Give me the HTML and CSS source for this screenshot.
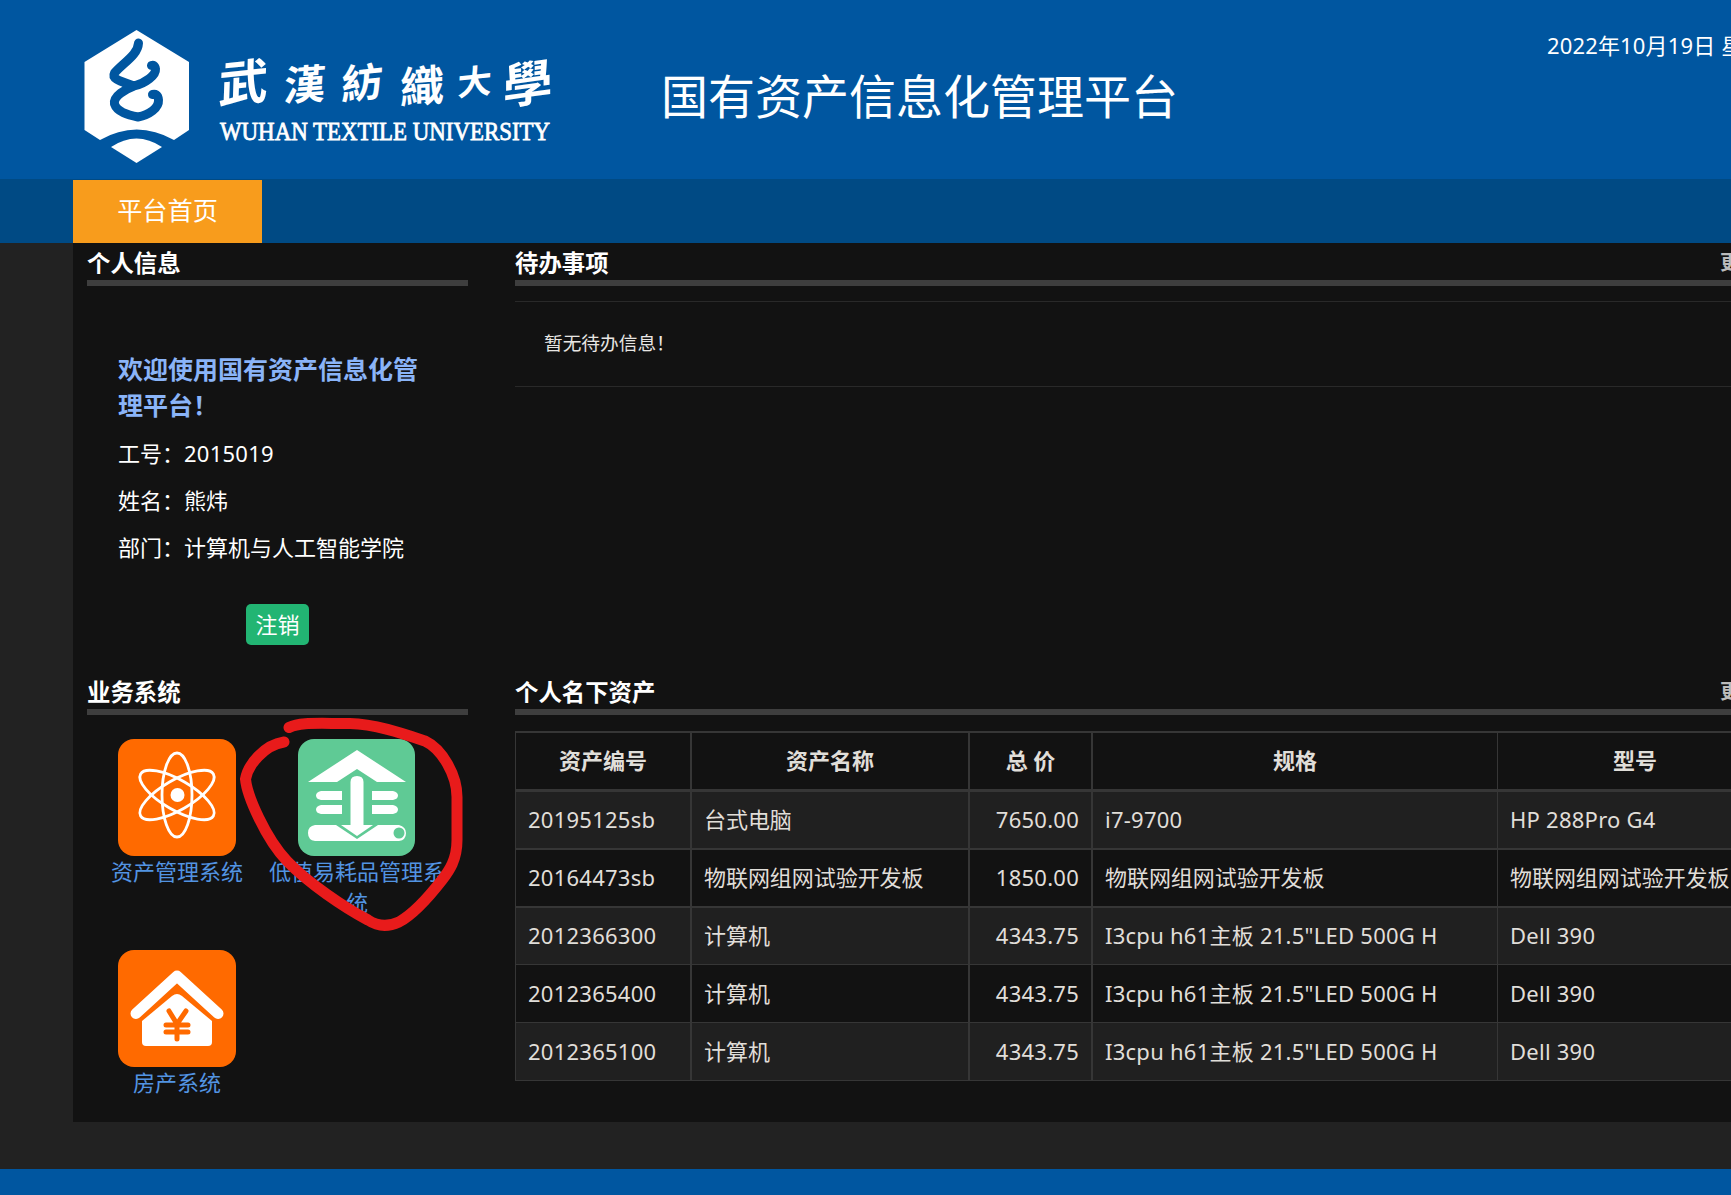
FILE: index.html
```html
<!DOCTYPE html>
<html lang="zh-CN">
<head>
<meta charset="utf-8">
<title>国有资产信息化管理平台</title>
<link rel="stylesheet" href="styles.css">
</head>
<body>
<header class="header">
  <svg class="logo" width="480" height="140" viewBox="80 26 480 140" role="img" aria-label="武汉纺织大学">
    <path fill="#fff" d="M136.500 30 L189 62 V130 L174 140 Q136.500 119 100 140 L84.500 130 V62 Z"/>
    <path fill="#fff" d="M111 147 Q136.500 130 162 147 L136.500 163 Z"/>
    <path class="logo-knot" d="M138.500 43 C138 55 123 63 114.500 73 C111 80 124 82 134 86 C146 83 156 75 155.500 69 C155 65 153 65 151.500 65.500 M134 86 C126 89 113 96 114.500 104 C117 112 128 115 138 117 C149 115 159 108 158.500 100 C158 94 155 94 152.500 94.500"/>
    <g class="logo-cn">
      <text transform="translate(218 103) skewX(-8) rotate(-6)" font-size="49">武</text>
      <text transform="translate(283 101) skewX(-8) rotate(-4)" font-size="41">漢</text>
      <text transform="translate(341 100) skewX(-8) rotate(-6)" font-size="41">紡</text>
      <text transform="translate(400 104) skewX(-4) rotate(-4)" font-size="44">織</text>
      <text transform="translate(457 96) skewX(-8) rotate(-6)" font-size="34">大</text>
      <text transform="translate(503 105) skewX(-8) rotate(-8)" font-size="49">學</text>
    </g>
    <text class="logo-en" x="220" y="139.500" textLength="330" lengthAdjust="spacingAndGlyphs">WUHAN TEXTILE UNIVERSITY</text>
  </svg>
  <h1 class="title">国有资产信息化管理平台</h1>
  <div class="date">2022年10月19日 星期三</div>
</header>
<nav class="nav"><a class="nav-tab">平台首页</a></nav>
<main class="panel">
  <section class="side">
    <h2 class="heading">个人信息</h2>
    <div class="profile">
      <p class="welcome">欢迎使用国有资产信息化管理平台！</p>
      <p class="field">工号：<span class="latin">2015019</span></p>
      <p class="field">姓名：熊炜</p>
      <p class="field">部门：计算机与人工智能学院</p>
      <button class="logout">注销</button>
    </div>
  </section>
  <section class="content">
    <h2 class="heading">待办事项<a class="more">更多</a></h2>
    <div class="todo">暂无待办信息！</div>
  </section>
  <section class="side">
    <h2 class="heading">业务系统</h2>
    <div class="apps">
      <a class="app">
        <svg width="118" height="117" viewBox="0 0 118 117">
          <rect width="118" height="117" rx="16" fill="#ff6a00"/>
          <g fill="none" stroke="#fff" stroke-width="2.800">
            <ellipse cx="59" cy="56" rx="15" ry="42"/>
            <ellipse cx="59" cy="56" rx="15" ry="42" transform="rotate(60 59 56)"/>
            <ellipse cx="59" cy="56" rx="15" ry="42" transform="rotate(-60 59 56)"/>
          </g>
          <circle cx="59.500" cy="56" r="7" fill="#fff"/>
        </svg>
        <span>资产管理系统</span>
      </a>
      <a class="app">
        <svg width="118" height="117" viewBox="0 0 118 117">
          <rect width="117" height="117" rx="16" fill="#5fca95"/>
          <g fill="#fff">
            <path d="M59 11 L108 43 H79 L59 30 L39 43 H10 Z"/>
            <path d="M52.500 43 Q52.500 37 59 37 Q65.500 37 65.500 43 V86 H75 L59 97 L43 86 H52.500 Z"/>
            <path d="M44 52 V61 H23 Q18 60 18 56.500 Q18 53 23 52 Z M44 66 V75 H23 Q18 74 18 70.500 Q18 67 23 66 Z M74 52 V61 H95 Q100 60 100 56.500 Q100 53 95 52 Z M74 66 V75 H95 Q100 74 100 70.500 Q100 67 95 66 Z"/>
            <path d="M17 86 H38 L59 100 L80 86 H101 Q108 88 108 94 Q108 101 101 102 H17 Q10 101 10 94 Q10 87 17 86 Z"/>
          </g>
          <circle cx="101" cy="94" r="5.500" fill="#5fca95"/>
        </svg>
        <span>低值易耗品管理系统</span>
      </a>
      <a class="app">
        <svg width="118" height="117" viewBox="0 0 118 117">
          <rect width="118" height="117" rx="16" fill="#ff6a00"/>
          <path d="M18 63.500 L59 26 L100 63.500" fill="none" stroke="#fff" stroke-width="11" stroke-linecap="round" stroke-linejoin="round"/>
          <path d="M24 71 L54 46 Q59 42 64 46 L94 71 V92 Q94 96 90 96 H28 Q24 96 24 92 Z" fill="#fff"/>
          <path d="M51 61 L59 74 L68 61 M59 74 V89 M48 75 H70 M48 82 H70" fill="none" stroke="#ff6a00" stroke-width="5" stroke-linecap="round"/>
        </svg>
        <span>房产系统</span>
      </a>
      <svg class="marker" width="226" height="216" viewBox="238 716 226 216">
        <path d="M289 727.500 C300 722 315 723.500 350 723.500 C375 724 404 734 425 741 C442 749 457 775 457 797 V840 C457 860 449 871 442 880 C428 898 412 915 399 922 C388 927 377 926 368 920 C345 908 308 883 287 861 C266 839 247 796 245.500 779 C248 765 264 745 284 742"/>
      </svg>
    </div>
  </section>
  <section class="content">
    <h2 class="heading">个人名下资产<a class="more">更多</a></h2>
    <table class="assets">
      <colgroup><col class="c-id"><col class="c-name"><col class="c-price"><col class="c-spec"><col class="c-model"></colgroup>
      <thead><tr><th>资产编号</th><th>资产名称</th><th>总 价</th><th>规格</th><th>型号</th></tr></thead>
      <tbody>
        <tr class="thick"><td>20195125sb</td><td class="han">台式电脑</td><td>7650.00</td><td>i7-9700</td><td>HP 288Pro G4</td></tr>
        <tr class="thick"><td>20164473sb</td><td class="han">物联网组网试验开发板</td><td>1850.00</td><td class="han">物联网组网试验开发板</td><td class="han">物联网组网试验开发板</td></tr>
        <tr class="short"><td>2012366300</td><td class="han">计算机</td><td>4343.75</td><td>I3cpu h61主板 21.5"LED 500G H</td><td>Dell 390</td></tr>
        <tr><td>2012365400</td><td class="han">计算机</td><td>4343.75</td><td>I3cpu h61主板 21.5"LED 500G H</td><td>Dell 390</td></tr>
        <tr><td>2012365100</td><td class="han">计算机</td><td>4343.75</td><td>I3cpu h61主板 21.5"LED 500G H</td><td>Dell 390</td></tr>
      </tbody>
    </table>
  </section>
</main>
<footer class="footer"></footer>
</body>
</html>
```
FILE: styles.css
```css
* { box-sizing: border-box; }
html, body { margin: 0; height: 1195px; overflow: hidden; }
body {
  background: #222;
  color: #fff;
  font: 22px/30px "Noto Sans", "Noto Sans CJK SC", sans-serif;
  display: flex;
  flex-direction: column;
  width: 1731px;
}
h1, h2, p { margin: 0; }

.header {
  flex: none;
  height: 179px;
  background: #0056a0;
  display: flex;
  align-items: flex-start;
  white-space: nowrap;
}
.logo { flex: none; margin: 26px 0 0 80px; }
.logo-knot { fill: none; stroke: #0056a0; stroke-width: 9; stroke-linecap: round; stroke-linejoin: round; }
.logo-cn { fill: #fff; font-family: "Noto Sans CJK TC", sans-serif; font-weight: 700; }
.logo-en { fill: #fff; font: 26px "Liberation Serif", serif; stroke: #fff; stroke-width: .8; }
.title { flex: none; margin: 61px 0 0 101px; width: 886px; font-size: 47px; line-height: 70px; font-weight: 400; }
.date { flex: none; padding-top: 30px; letter-spacing: .15px; }

.nav { flex: none; height: 64px; padding: 1px 0 0 73px; background: #004a84; }
.nav-tab {
  display: flex;
  align-items: center;
  justify-content: center;
  width: 189px;
  height: 63px;
  padding-bottom: 3px;
  background: #f89c1c;
  font-size: 25.200px;
}

.panel {
  flex: none;
  height: 879px;
  margin-left: 73px;
  padding-left: 14px;
  background: #121212;
  display: grid;
  grid-template-columns: 381px 1259px;
  grid-template-rows: 429px 450px;
  column-gap: 47px;
  overflow: hidden;
}
.heading {
  display: flex;
  justify-content: space-between;
  height: 43px;
  padding-top: 3px;
  border-bottom: 6px solid #3e3e3e;
  font-size: 23.400px;
  line-height: 34px;
  font-weight: 700;
}
.more { margin-right: 14px; color: #bbb; font-size: 20px; }

.profile { display: flex; flex-direction: column; padding: 65px 31px 0; }
.welcome { color: #8ab4f8; font-size: 25px; line-height: 36px; font-weight: 700; margin-bottom: 7px; }
.field { line-height: 47px; }
.latin { letter-spacing: .25px; }
.logout {
  width: 63px;
  height: 41px;
  margin: 33px 0 0 128px;
  padding: 0 0 1px;
  border: 0;
  border-radius: 5px;
  background: #22b573;
  color: #fff;
  font: inherit;
}

.todo {
  height: 86px;
  margin-top: 15px;
  padding-left: 29px;
  border: solid #292929;
  border-width: 1px 0;
  font-size: 18.700px;
  line-height: 82px;
  color: #e8e6e3;
}

.apps {
  position: relative;
  display: grid;
  grid-template-columns: 180px 180px;
  grid-auto-rows: 211px;
  padding-top: 24px;
}
.app {
  display: flex;
  flex-direction: column;
  align-items: center;
  text-align: center;
  color: #5294e2;
  line-height: 31px;
}
.marker { position: absolute; left: 151px; top: 1px; fill: none; stroke: #e81b1b; stroke-width: 11; stroke-linecap: round; stroke-linejoin: round; }

.assets {
  width: 1259px;
  margin-top: 16px;
  table-layout: fixed;
  border-collapse: separate;
  border-spacing: 0;
  color: #e0ded9;
}
.c-id { width: 177px; }
.c-name { width: 278px; }
.c-price { width: 123px; }
.c-spec { width: 405px; }
.c-model { width: 276px; }
.assets th, .assets td {
  height: 58px;
  padding: 0 12px 2px;
  border: solid #363636;
  border-width: 0 2px 1px 0;
  white-space: nowrap;
  text-align: left;
  letter-spacing: .25px;
}
.assets th { height: 61px; border-width: 2px 2px 3px 0; text-align: center; letter-spacing: 0; }
.assets .thick td { border-bottom-width: 2px; }
.assets .short td { height: 57px; }
.assets tr > :first-child { border-left-width: 1px; }
.assets tr > :nth-child(4) { border-right-width: 1px; }
.assets td:nth-child(3) { text-align: right; }
.assets .han { letter-spacing: -.05px; }
.assets tbody tr:nth-child(odd) { background: #202020; }

.footer { flex: none; height: 26px; margin-top: 47px; background: #0056a0; }
```
